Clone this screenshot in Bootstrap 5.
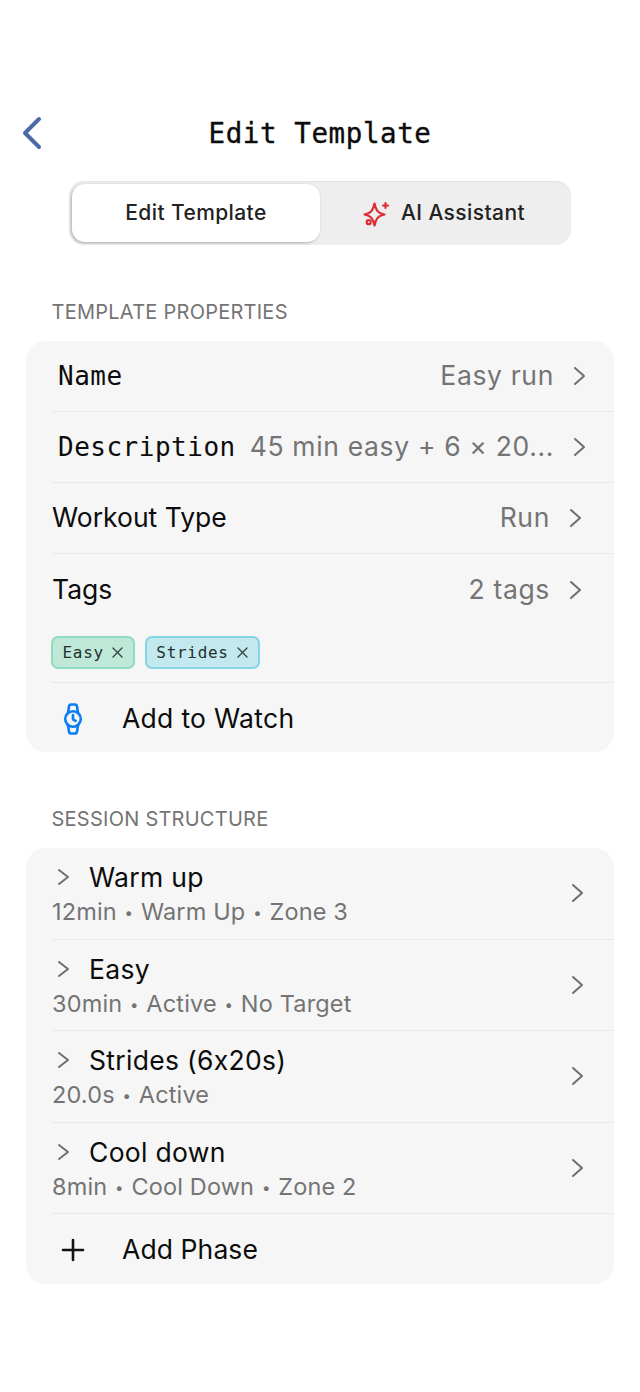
<!DOCTYPE html>
<html lang="en"><head><meta charset="utf-8">
<link href="https://cdn.jsdelivr.net/npm/bootstrap@5.3.0/dist/css/bootstrap.min.css" rel="stylesheet">
<style>
body{background:#fff;font-family:Inter,"Liberation Sans",sans-serif;font-feature-settings:"calt" 0;color:#0c0c0c;width:640px;height:1392px;overflow:hidden}
.mono{font-family:"DejaVu Sans Mono","Liberation Mono",monospace}
.scr{padding:116px 26px 0}
.hdr{height:34px;margin-bottom:31px}
.back{position:absolute;left:-4px;top:0}
.ttl{font-size:27.5px;line-height:34px;font-weight:400;letter-spacing:.6px;margin:0;-webkit-text-stroke:.35px #0c0c0c}
.seg{width:502px;height:64px;margin:0 auto 55px;background:#eeeeef;border-radius:15px;padding:3px;box-shadow:inset 0 1px 1px #e3e3e3}
.seg-on,.seg-off{width:249.5px;height:58px;font-size:21px;font-weight:500;letter-spacing:.4px;color:#222;border-radius:13px}
.seg-off{gap:12px;padding-right:2px}
.seg-on{background:#fff;box-shadow:-1px 1px 3px rgba(0,0,0,.28)}
.sec{font-size:20px;line-height:24px;color:#747474;padding-left:25.5px;margin-bottom:17px;letter-spacing:.25px}
.pnl{background:#f6f6f6;border-radius:20px;padding-left:26px}
.pnl1{margin-bottom:55px}
.r1{height:71px;border-bottom:1px solid #e9e9e9;padding-right:28px;font-size:26.5px}
.r1 .val{color:#747474;margin-right:19px;white-space:nowrap;letter-spacing:.65px}
.lbl-m{padding-left:6px;font-size:26px;font-weight:400;white-space:nowrap;letter-spacing:.5px}
.rtags{height:58px;border-bottom:1px solid #e9e9e9;padding-top:11px;margin-left:-1px;gap:10px}
.tg{height:33px;border-radius:7px;font-size:16px;letter-spacing:.7px;padding:0 10px 0 9.5px;border:2px solid;color:#22302c}
.tg-g{background:#c0e8d9;border-color:#90dcc0}
.tg-b{background:#c3e8ef;border-color:#84d6e4}
.r2{height:91.5px;border-bottom:1px solid #e9e9e9;padding-right:30px}
.r2-g{padding-top:3px}
.r2 .twist{margin-left:5px}
.r2 .t{font-size:26.5px;line-height:32px;margin-left:19px;letter-spacing:.3px}
.r2 .s{font-size:23.5px;line-height:30px;color:#747474;margin-top:4px;white-space:nowrap;letter-spacing:.15px}
.dot{font-style:normal;font-size:15px;vertical-align:2px;margin:0 1px}
.act{height:69px;font-size:26.5px;letter-spacing:.3px;padding-top:2px}
.act-b{height:70px;letter-spacing:.1px}
.ico{width:44px;margin-left:-1px;margin-right:27px}
</style></head><body>
<div class="scr">
 <div class="hdr position-relative d-flex justify-content-center align-items-center">
  <svg class="back" width="22" height="34" viewBox="0 0 22 34" fill="none" stroke="#4a6aa8" stroke-width="4" stroke-linecap="round" stroke-linejoin="round"><path d="M17 3 3 17l14 14"/></svg>
  <h1 class="ttl mono">Edit Template</h1>
 </div>
 <div class="seg d-flex">
  <div class="seg-on d-flex align-items-center justify-content-center">Edit Template</div>
  <div class="seg-off d-flex align-items-center justify-content-center">
   <svg width="28" height="28" viewBox="0 0 28 28" fill="none" stroke="#dd2c32" stroke-width="2.200" stroke-linejoin="round" stroke-linecap="round"><path d="M13.500 4.500C14.800 11 16.500 14 23.500 15.500 16.500 17 14.800 20 13.500 26.500 12.200 20 10.500 17 3.500 15.500 10.500 14 12.200 11 13.500 4.500Z"/><path d="M24.500 4v5M22 6.500h5"/><circle cx="7.700" cy="23.200" r="2"/></svg>
   <span>AI Assistant</span>
  </div>
 </div>
 <div class="sec">TEMPLATE PROPERTIES</div>
 <div class="pnl pnl1">
  <div class="r1 d-flex align-items-center justify-content-between"><span class="lbl-m mono">Name</span><span class="d-flex align-items-center"><span class="val">Easy run</span><svg width="13" height="20" viewBox="0 0 13 20" fill="none" stroke="#6f6f6f" stroke-width="2" stroke-linecap="round" stroke-linejoin="round"><path d="m2 2 9 8-9 8"/></svg></span></div>
  <div class="r1 d-flex align-items-center justify-content-between"><span class="lbl-m mono">Description</span><span class="d-flex align-items-center"><span class="val">45 min easy + 6 × 20...</span><svg width="13" height="20" viewBox="0 0 13 20" fill="none" stroke="#6f6f6f" stroke-width="2" stroke-linecap="round" stroke-linejoin="round"><path d="m2 2 9 8-9 8"/></svg></span></div>
  <div class="r1 d-flex align-items-center justify-content-between"><span>Workout Type</span><span class="d-flex align-items-center"><span class="val">Run</span><svg class="me-1" width="13" height="20" viewBox="0 0 13 20" fill="none" stroke="#6f6f6f" stroke-width="2" stroke-linecap="round" stroke-linejoin="round"><path d="m2 2 9 8-9 8"/></svg></span></div>
  <div class="r1 d-flex align-items-center justify-content-between border-0"><span>Tags</span><span class="d-flex align-items-center"><span class="val">2 tags</span><svg class="me-1" width="13" height="20" viewBox="0 0 13 20" fill="none" stroke="#6f6f6f" stroke-width="2" stroke-linecap="round" stroke-linejoin="round"><path d="m2 2 9 8-9 8"/></svg></span></div>
  <div class="rtags d-flex align-items-start">
   <span class="tg tg-g mono d-inline-flex align-items-center gap-2">Easy <svg width="11" height="11" viewBox="0 0 11 11" stroke="#33423d" stroke-width="1.300" stroke-linecap="round"><path d="m1 1 9 9M10 1l-9 9"/></svg></span>
   <span class="tg tg-b mono d-inline-flex align-items-center gap-2">Strides <svg width="11" height="11" viewBox="0 0 11 11" stroke="#33423d" stroke-width="1.300" stroke-linecap="round"><path d="m1 1 9 9M10 1l-9 9"/></svg></span>
  </div>
  <div class="act d-flex align-items-center">
   <span class="d-flex justify-content-center ico"><svg width="20" height="34" viewBox="0 0 20 34" fill="none" stroke="#0a7cf5" stroke-width="2.600" stroke-linecap="round" stroke-linejoin="round"><circle cx="10" cy="17" r="7.800"/><path d="M5 11 6 4.500Q6.300 2.500 8 2.500h4q1.700 0 2 2L15 11M5 23l1 6.500q.3 2 2 2h4q1.700 0 2-2L15 23M10 13v4.300l2.600 1.500"/></svg></span>
   <span>Add to Watch</span>
  </div>
 </div>
 <div class="sec">SESSION STRUCTURE</div>
 <div class="pnl">
  <div class="r2 d-flex align-items-center justify-content-between"><div class="r2-g"><div class="d-flex align-items-center"><svg class="twist" width="13" height="20" viewBox="0 0 13 20" fill="none" stroke="#6f6f6f" stroke-width="2" stroke-linecap="round" stroke-linejoin="round"><path d="m2 3 9 7-9 7"/></svg><span class="t">Warm up</span></div><div class="s">12min <i class="dot">•</i> Warm Up <i class="dot">•</i> Zone 3</div></div><svg width="13" height="20" viewBox="0 0 13 20" fill="none" stroke="#6f6f6f" stroke-width="2" stroke-linecap="round" stroke-linejoin="round"><path d="m2 2 9 8-9 8"/></svg></div>
  <div class="r2 d-flex align-items-center justify-content-between"><div class="r2-g"><div class="d-flex align-items-center"><svg class="twist" width="13" height="20" viewBox="0 0 13 20" fill="none" stroke="#6f6f6f" stroke-width="2" stroke-linecap="round" stroke-linejoin="round"><path d="m2 3 9 7-9 7"/></svg><span class="t">Easy</span></div><div class="s">30min <i class="dot">•</i> Active <i class="dot">•</i> No Target</div></div><svg width="13" height="20" viewBox="0 0 13 20" fill="none" stroke="#6f6f6f" stroke-width="2" stroke-linecap="round" stroke-linejoin="round"><path d="m2 2 9 8-9 8"/></svg></div>
  <div class="r2 d-flex align-items-center justify-content-between"><div class="r2-g"><div class="d-flex align-items-center"><svg class="twist" width="13" height="20" viewBox="0 0 13 20" fill="none" stroke="#6f6f6f" stroke-width="2" stroke-linecap="round" stroke-linejoin="round"><path d="m2 3 9 7-9 7"/></svg><span class="t">Strides (6x20s)</span></div><div class="s">20.0s <i class="dot">•</i> Active</div></div><svg width="13" height="20" viewBox="0 0 13 20" fill="none" stroke="#6f6f6f" stroke-width="2" stroke-linecap="round" stroke-linejoin="round"><path d="m2 2 9 8-9 8"/></svg></div>
  <div class="r2 d-flex align-items-center justify-content-between"><div class="r2-g"><div class="d-flex align-items-center"><svg class="twist" width="13" height="20" viewBox="0 0 13 20" fill="none" stroke="#6f6f6f" stroke-width="2" stroke-linecap="round" stroke-linejoin="round"><path d="m2 3 9 7-9 7"/></svg><span class="t">Cool down</span></div><div class="s">8min <i class="dot">•</i> Cool Down <i class="dot">•</i> Zone 2</div></div><svg width="13" height="20" viewBox="0 0 13 20" fill="none" stroke="#6f6f6f" stroke-width="2" stroke-linecap="round" stroke-linejoin="round"><path d="m2 2 9 8-9 8"/></svg></div>
  <div class="act act-b d-flex align-items-center">
   <span class="d-flex justify-content-center ico"><svg width="24" height="24" viewBox="0 0 24 24" stroke="#111" stroke-width="2.600" stroke-linecap="round"><path d="M12 2v20M2 12h20"/></svg></span>
   <span>Add Phase</span>
  </div>
 </div>
</div>
</body></html>
